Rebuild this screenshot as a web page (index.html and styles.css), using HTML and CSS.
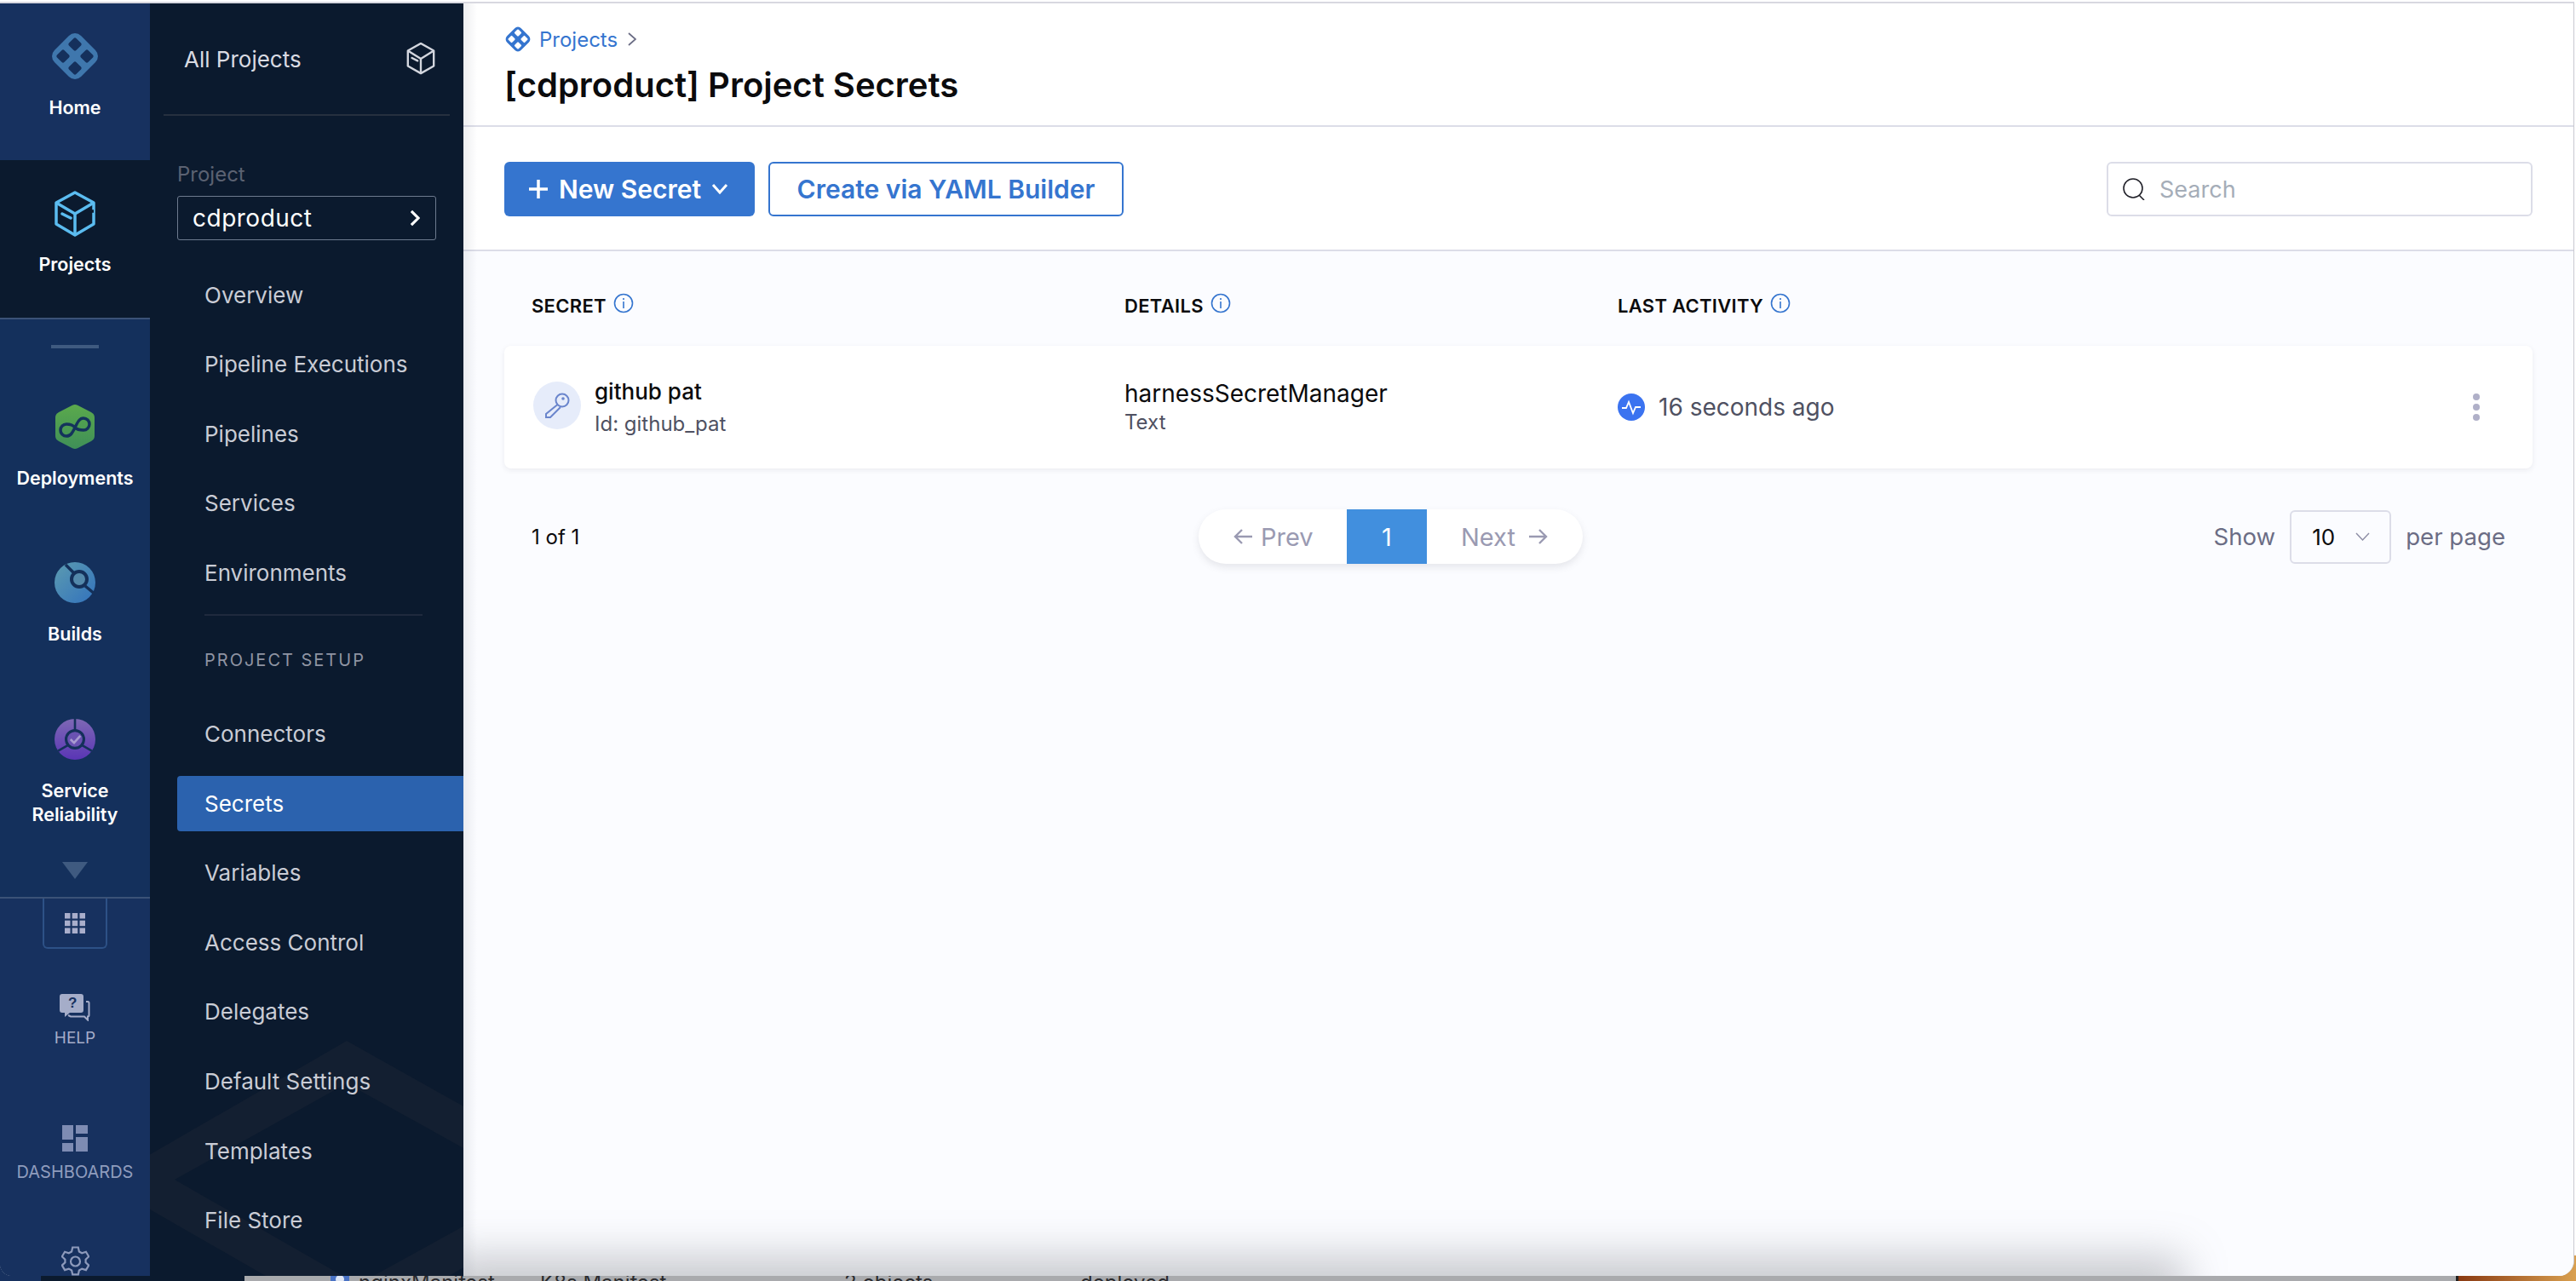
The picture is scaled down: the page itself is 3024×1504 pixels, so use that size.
FILE: index.html
```html
<!DOCTYPE html>
<html lang="en">
<head>
  <meta charset="UTF-8" />
  <title>Project Secrets</title>
  <link rel="stylesheet" href="styles.css">
</head>
<body>

<div class="backdrop">
  <div class="backdrop-row">
    <svg width="24" height="24" viewBox="0 0 24 24"><rect x="1" y="0" width="22" height="24" rx="3" fill="#4a72c4"/><circle cx="12" cy="10" r="5" fill="#dfe6f5"/></svg>
    <span class="backdrop-name">nginxManifest</span>
    <span class="backdrop-kind">K8s Manifest</span>
    <span class="backdrop-count">2 objects</span>
    <span>deployed</span>
  </div>
</div>

<div class="window">

  <nav class="rail">
    <div class="rail-top">
      <a class="rail-item rail-home">
        <svg width="60" height="60" viewBox="0 0 60 60">
          <rect x="8" y="8" width="44" height="44" rx="10" transform="rotate(45 30 30)" fill="#3f77ad"/>
          <g fill="#15305c">
            <rect x="24" y="10" width="12" height="12" rx="2" transform="rotate(45 30 16)"/>
            <rect x="10" y="24" width="12" height="12" rx="2" transform="rotate(45 16 30)"/>
            <rect x="38" y="24" width="12" height="12" rx="2" transform="rotate(45 44 30)"/>
            <rect x="24" y="38" width="12" height="12" rx="2" transform="rotate(45 30 44)"/>
          </g>
        </svg>
        <span>Home</span>
      </a>
      <a class="rail-item rail-active">
        <svg width="48" height="54" viewBox="0 0 48 54" fill="none" stroke="#5bbcf0" stroke-width="3.500" stroke-linejoin="round">
          <path d="M24 2L46 14V39L24 52L2 39V14z"/>
          <path d="M2 14L24 27L46 14M24 27V52"/>
          <path d="M9 27l10 5" stroke-linecap="round"/>
          <path d="M46 24H42" stroke="#0b1a2e"/>
        </svg>
        <span>Projects</span>
      </a>
      <div class="rail-mods">
        <div class="rail-handle"></div>
        <a class="rail-item rail-mod rail-deploy">
          <svg width="48" height="52" viewBox="0 0 46 52">
            <defs><linearGradient id="gradGreen" x1="0" y1="0" x2="0" y2="1"><stop offset="0" stop-color="#5ba94c"/><stop offset="1" stop-color="#3f8f58"/></linearGradient></defs>
            <path d="M23 0c1 0 2 .300 3 .800L42 9c2.500 1.300 4 3.500 4 6v22c0 2.500-1.500 4.700-4 6l-16 8.200c-2 1-4 1-6 0L4 43c-2.500-1.300-4-3.500-4-6V15c0-2.500 1.500-4.700 4-6L20 .800C21 .300 22 0 23 0z" fill="url(#gradGreen)"/>
            <path d="M23 27C20 23 16 23 13 23A7 7 0 0 0 13 37C18 37 20 33 23 27C26 21 28 16 33 16A7 7 0 0 1 33 30C29 30 26 30 23 27Z" fill="none" stroke="#14335c" stroke-width="3.500"/>
          </svg>
          <span>Deployments</span>
        </a>
        <a class="rail-item rail-mod rail-builds">
          <svg width="48" height="48" viewBox="0 0 48 48">
            <defs><linearGradient id="gradBlue" x1="0" y1="0" x2="1" y2="1"><stop offset="0" stop-color="#5c9bb0"/><stop offset="1" stop-color="#3272bd"/></linearGradient></defs>
            <circle cx="24" cy="24" r="24" fill="url(#gradBlue)"/>
            <path d="M13 3l10 10M36 28l12 10" stroke="#14305a" stroke-width="3.500"/>
            <circle cx="29" cy="20" r="9" fill="#5489ab" stroke="#14305a" stroke-width="4"/>
          </svg>
          <span>Builds</span>
        </a>
        <a class="rail-item rail-mod rail-srm">
          <svg width="48" height="48" viewBox="0 0 46 46">
            <defs><linearGradient id="gradPurple" x1="0" y1="0" x2="0" y2="1"><stop offset="0" stop-color="#7e68b5"/><stop offset="1" stop-color="#5a35b5"/></linearGradient></defs>
            <circle cx="23" cy="23" r="23" fill="url(#gradPurple)"/>
            <path d="M23 0v14M4 36l12-7M42 36l-12-7" stroke="#14305a" stroke-width="2.500"/>
            <circle cx="23" cy="23" r="10" fill="#6a52b2" stroke="#14305a" stroke-width="3"/>
            <path d="M18 23l4 4 7-8" fill="none" stroke="#a89bd0" stroke-width="2.500"/>
          </svg>
          <span>Service Reliability</span>
        </a>
        <div class="rail-more"></div>
      </div>
    </div>
    <div class="rail-bottom">
      <div class="rail-grid">
        <svg width="24" height="24" viewBox="0 0 24 24" fill="#a9aecb">
          <rect x="0" y="0" width="6.500" height="6.500"/><rect x="8.700" y="0" width="6.500" height="6.500"/><rect x="17.500" y="0" width="6.500" height="6.500"/>
          <rect x="0" y="8.700" width="6.500" height="6.500"/><rect x="8.700" y="8.700" width="6.500" height="6.500"/><rect x="17.500" y="8.700" width="6.500" height="6.500"/>
          <rect x="0" y="17.500" width="6.500" height="6.500"/><rect x="8.700" y="17.500" width="6.500" height="6.500"/><rect x="17.500" y="17.500" width="6.500" height="6.500"/>
        </svg>
      </div>
      <a class="rail-link rail-help">
        <svg width="36" height="32" viewBox="0 0 36 32">
          <path d="M3 0h22c2 0 3 1 3 3v16c0 2-1 3-3 3H12l-6 5v-5H3c-2 0-3-1-3-3V3c0-2 1-3 3-3z" fill="#a5adc9"/>
          <path d="M31 9h2c1 0 1.500.500 1.500 1.500V25c0 1-.500 1.500-1.500 1.500v4l-4-4H13l-3-1.500" fill="none" stroke="#a5adc9" stroke-width="2"/>
          <text x="10" y="16" class="help-mark">?</text>
        </svg>
        <span>HELP</span>
      </a>
      <a class="rail-link rail-dash">
        <svg width="30" height="31" viewBox="0 0 30 31" fill="#7e8cb3">
          <rect x="0" y="0" width="13" height="17"/><rect x="16" y="0" width="14" height="10"/>
          <rect x="0" y="21" width="13" height="10"/><rect x="16" y="14" width="14" height="17"/>
        </svg>
        <span>DASHBOARDS</span>
      </a>
      <a class="rail-link rail-gear">
        <svg width="33" height="38" viewBox="0 0 30 34" fill="none" stroke="#8d9abb" stroke-width="2">
          <path d="M12 2h6l1 4.500 3 1.700 4.300-1.400 3 5-3.300 3.100v3.200l3.300 3.100-3 5-4.300-1.400-3 1.700-1 4.500h-6l-1-4.500-3-1.700-4.300 1.400-3-5 3.300-3.100v-3.200l-3.300-3.100 3-5 4.300 1.400 3-1.700z"/>
          <circle cx="15" cy="17" r="5"/>
        </svg>
      </a>
    </div>
  </nav>

  <aside class="sidenav">
    <svg class="sidenav-mark" width="368" height="300" viewBox="176 1198 368 300">
      <path fill="#131f31" fill-rule="evenodd" d="M407 1222L710 1392L420 1560L120 1388zM407 1272L205 1385L420 1508L627 1394z"/>
    </svg>
    <div class="allprojects">
      <span>All Projects</span>
      <svg width="34" height="38" viewBox="0 0 34 40" fill="none" stroke="#d3d6de" stroke-width="2.500" stroke-linejoin="round">
        <path d="M17 1L33 10V29L17 38L1 29V10z"/>
        <path d="M1 10L17 20L33 10M17 20V38"/>
        <path d="M6 19l7 3.500" stroke-linecap="round"/>
      </svg>
    </div>
    <div class="project-label">Project</div>
    <div class="project-select">
      <span>cdproduct</span>
      <svg width="12" height="20" viewBox="0 0 13 22" fill="none" stroke="#fff" stroke-width="3.500"><path d="M2 2l9 9-9 9"/></svg>
    </div>
    <ul class="navlist">
      <li>Overview</li>
      <li>Pipeline Executions</li>
      <li>Pipelines</li>
      <li>Services</li>
      <li>Environments</li>
    </ul>
    <div class="nav-divider"></div>
    <div class="nav-heading">PROJECT SETUP</div>
    <ul class="navlist navlist-setup">
      <li>Connectors</li>
      <li class="nav-active">Secrets</li>
      <li>Variables</li>
      <li>Access Control</li>
      <li>Delegates</li>
      <li>Default Settings</li>
      <li>Templates</li>
      <li>File Store</li>
    </ul>
  </aside>

  <main class="main">
    <header class="pagehead">
      <div class="crumbs">
        <svg width="32" height="32" viewBox="0 0 60 60">
          <rect x="8" y="8" width="44" height="44" rx="10" transform="rotate(45 30 30)" fill="#3575cf"/>
          <g fill="#fff">
            <rect x="24" y="10" width="12" height="12" rx="2" transform="rotate(45 30 16)"/>
            <rect x="10" y="24" width="12" height="12" rx="2" transform="rotate(45 16 30)"/>
            <rect x="38" y="24" width="12" height="12" rx="2" transform="rotate(45 44 30)"/>
            <rect x="24" y="38" width="12" height="12" rx="2" transform="rotate(45 30 44)"/>
          </g>
        </svg>
        <a>Projects</a>
        <svg class="crumb-caret" width="10" height="16" viewBox="0 0 10 16" fill="none" stroke="#6b6d85" stroke-width="1.800"><path d="M1 1l8 7-8 7"/></svg>
      </div>
      <h1>[cdproduct] Project Secrets</h1>
    </header>

    <div class="toolbar">
      <button class="btn btn-primary">
        <svg width="24" height="24" viewBox="0 0 24 24" stroke="#fff" stroke-width="3.500"><path d="M12 1v22M1 12h22"/></svg>
        <span>New Secret</span>
        <svg width="20" height="12" viewBox="0 0 20 12" fill="none" stroke="#fff" stroke-width="3"><path d="M2 1l8 9 8-9"/></svg>
      </button>
      <button class="btn btn-outline">Create via YAML Builder</button>
      <div class="search">
        <svg width="26" height="26" viewBox="0 0 26 26" fill="none" stroke="#22222a" stroke-width="1.600"><circle cx="12" cy="12" r="11"/><path d="M19 20l6 6"/></svg>
        <span>Search</span>
      </div>
    </div>

    <section class="content">
      <div class="tablehead">
        <div class="col col-name">SECRET <svg class="info" width="24" height="24" viewBox="0 0 24 24" fill="none" stroke="#3575cf" stroke-width="1.600"><circle cx="12" cy="12" r="10.500"/><path d="M12 10v8M12 6v2"/></svg></div>
        <div class="col col-details">DETAILS <svg class="info" width="24" height="24" viewBox="0 0 24 24" fill="none" stroke="#3575cf" stroke-width="1.600"><circle cx="12" cy="12" r="10.500"/><path d="M12 10v8M12 6v2"/></svg></div>
        <div class="col col-activity">LAST ACTIVITY <svg class="info" width="24" height="24" viewBox="0 0 24 24" fill="none" stroke="#3575cf" stroke-width="1.600"><circle cx="12" cy="12" r="10.500"/><path d="M12 10v8M12 6v2"/></svg></div>
      </div>

      <div class="row">
        <div class="col col-name secret-cell">
          <div class="key-badge">
            <svg width="30" height="30" viewBox="0 0 30 30" fill="none" stroke="#6a85cc" stroke-width="2">
              <circle cx="21" cy="9" r="7.500"/>
              <circle cx="22" cy="7" r="1.800" fill="#6a85cc" stroke="none"/>
              <path d="M15.500 14L2 25v4h5l12-12"/>
            </svg>
          </div>
          <div class="secret-text">
            <div class="secret-name">github pat</div>
            <div class="secret-id">Id: github_pat</div>
          </div>
        </div>
        <div class="col col-details">
          <div class="manager">harnessSecretManager</div>
          <div class="manager-type">Text</div>
        </div>
        <div class="col col-activity activity-cell">
          <svg width="32" height="32" viewBox="0 0 32 32">
            <circle cx="16" cy="16" r="16" fill="#3b73f0"/>
            <path d="M5 17h5l3-7 5 13 3-7h6" fill="none" stroke="#fff" stroke-width="1.800"/>
          </svg>
          <span>16 seconds ago</span>
        </div>
        <div class="row-menu"><i></i><i></i><i></i></div>
      </div>

      <div class="pagerbar">
        <div class="pager-count">1 of 1</div>
        <div class="pager">
          <span class="pager-btn pager-prev">
            <svg width="22" height="18" viewBox="0 0 22 18" fill="none" stroke="#9a9ab2" stroke-width="2.400"><path d="M10 1L2 9l8 8M2 9h20"/></svg>
            Prev
          </span>
          <span class="pager-num">1</span>
          <span class="pager-btn pager-next">
            Next
            <svg width="22" height="18" viewBox="0 0 22 18" fill="none" stroke="#9a9ab2" stroke-width="2.400"><path d="M12 1l8 8-8 8M20 9H0"/></svg>
          </span>
        </div>
        <div class="pager-size">
          <span>Show</span>
          <div class="size-select">
            <b>10</b>
            <svg width="17" height="10" viewBox="0 0 17 10" fill="none" stroke="#8d8da5" stroke-width="1.400"><path d="M1 1l7.500 8L16 1"/></svg>
          </div>
          <span>per page</span>
        </div>
      </div>
    </section>
    <div class="footer-shade"></div>
  </main>
</div>

</body>
</html>
```

FILE: styles.css
```css
html, body {
  margin: 0;
  padding: 0;
  height: 100%;
}
body {
  position: relative;
  width: 3024px;
  height: 1504px;
  overflow: hidden;
  font-family: Inter, "Liberation Sans", sans-serif;
  background: #fff;
}
ul {
  list-style: none;
  margin: 0;
  padding: 0;
}

/* page behind the app window, only a sliver shows at the bottom */
.backdrop {
  position: absolute;
  left: 0;
  right: 0;
  bottom: 0;
  height: 30px;
  background: linear-gradient(90deg, #17315f 0, #17315f 48px, #0b1a2e 48px, #0b1a2e 287px, #a9aaad 287px, #a9aaad 2883px, #222 2883px, #222 2886px, #8a3a12 2886px, #d9a050 100%);
  overflow: hidden;
}
.backdrop-row {
  display: flex;
  align-items: flex-start;
  margin: 18px 0 0 387px;
  font-size: 24px;
  line-height: 28px;
  color: #2a2a2e;
}
.backdrop-name { margin-left: 10px; width: 213px; }
.backdrop-kind { width: 357px; }
.backdrop-count { width: 277px; }

.window {
  position: absolute;
  left: 0;
  top: 2px;
  width: 3022px;
  height: 1496px;
  box-sizing: border-box;
  border-top: 2px solid #d8d8e0;
  border-right: 1px solid #c9c9d0;
  display: flex;
  background: #fff;
  overflow: hidden;
  border-radius: 0 0 18px 14px;
}

/* narrow module rail */
.rail {
  width: 176px;
  flex-shrink: 0;
  background: #14305c;
  display: flex;
  flex-direction: column;
  color: #fff;
  overflow: hidden;
}
.rail-top {
  height: 1051px;
  box-sizing: border-box;
  border-bottom: 2px solid #3b5277;
  flex-shrink: 0;
  overflow: hidden;
}
.rail-item {
  display: flex;
  flex-direction: column;
  align-items: center;
  font-size: 21.500px;
  font-weight: 600;
  text-align: center;
  line-height: 26px;
}
.rail-home {
  height: 184px;
  padding-top: 32px;
  box-sizing: border-box;
  background: #17315f;
}
.rail-home span {
  margin-top: 17px;
}
.rail-active {
  height: 185px;
  padding-top: 36px;
  box-sizing: border-box;
  background: #0b1a2e;
}
.rail-active span {
  margin-top: 19px;
}
.rail-mods {
  border-top: 2px solid #3b5277;
}
.rail-handle {
  width: 56px;
  height: 4px;
  margin: 30px auto 0;
  background: #3f5a80;
}
.rail-mod {
  line-height: 28px;
}
.rail-mod svg {
  margin-bottom: 20px;
}
.rail-deploy { margin-top: 66px; }
.rail-builds { margin-top: 85px; }
.rail-srm { margin-top: 86px; }
.rail-builds svg, .rail-srm svg { margin-bottom: 22px; }
.rail-srm span { width: 120px; }
.rail-more {
  width: 0;
  height: 0;
  margin: 42px auto 0;
  border-left: 15px solid transparent;
  border-right: 15px solid transparent;
  border-top: 20px solid #3f5a80;
}
.rail-bottom {
  display: flex;
  flex-direction: column;
  align-items: center;
  background: #17315f;
  flex: 1;
}
.rail-grid {
  width: 76px;
  height: 59px;
  flex-shrink: 0;
  box-sizing: border-box;
  border: 2px solid #2d5186;
  border-top: none;
  border-radius: 0 0 6px 6px;
  display: flex;
  align-items: center;
  justify-content: center;
}
.rail-link {
  display: flex;
  flex-direction: column;
  align-items: center;
  flex-shrink: 0;
  font-size: 19px;
  color: #a5adc9;
  line-height: 24px;
}
.rail-help {
  margin-top: 53px;
}
.rail-help span {
  margin-top: 8px;
}
.help-mark {
  font-family: "Liberation Sans", sans-serif;
  font-size: 17px;
  font-weight: bold;
  fill: #17315f;
}
.rail-dash {
  margin-top: 90px;
  font-size: 20px;
  color: #8f9cbd;
}
.rail-dash span {
  margin-top: 12px;
}
.rail-gear {
  margin-top: 74px;
}

/* second nav column */
.sidenav {
  position: relative;
  width: 368px;
  flex-shrink: 0;
  background: #0b1a2e;
  color: #cfd2da;
  overflow: hidden;
}
.sidenav-mark {
  position: absolute;
  left: 0;
  bottom: 0;
}
.allprojects {
  position: relative;
  height: 132px;
  margin: 0 16px;
  padding: 0 17px 0 24px;
  box-sizing: border-box;
  border-bottom: 2px solid #26303f;
  display: flex;
  align-items: center;
  justify-content: space-between;
  font-size: 26px;
  color: #d9dbe2;
}
.project-label {
  position: relative;
  margin: 54px 0 0 32px;
  font-size: 24px;
  line-height: 30px;
  color: #5b6272;
}
.project-select {
  position: relative;
  height: 52px;
  margin: 10px 32px 0;
  padding: 0 18px 0 17px;
  box-sizing: border-box;
  border: 1px solid #6d7a8e;
  border-radius: 3px;
  display: flex;
  align-items: center;
  justify-content: space-between;
  font-size: 28px;
  color: #fff;
  letter-spacing: 0.5px;
}
.navlist {
  position: relative;
  margin-top: 31.500px;
}
.navlist li {
  margin-left: 32px;
  padding-left: 32px;
  height: 65px;
  margin-bottom: 16.600px;
  line-height: 65px;
  font-size: 26px;
  color: #c9ccd5;
  white-space: nowrap;
}
.navlist li:last-child {
  margin-bottom: 0;
}
.navlist-setup {
  margin-top: 40.500px;
}
.navlist li.nav-active {
  background: #2b62ae;
  color: #fff;
  border-radius: 4px 0 0 4px;
}
.nav-divider {
  position: relative;
  height: 2px;
  margin: 16.600px 48px 0 64px;
  background: #1f2a3d;
}
.nav-heading {
  position: relative;
  margin: 39px 0 0 64px;
  font-size: 20px;
  line-height: 26px;
  letter-spacing: 2px;
  color: #8f94a3;
}

/* main area */
.main {
  position: relative;
  flex: 1;
  min-width: 0;
  display: flex;
  flex-direction: column;
  background: #fbfcff;
  overflow: hidden;
}
.main::before {
  content: "";
  position: absolute;
  left: 0;
  top: 0;
  bottom: 0;
  width: 16px;
  background: linear-gradient(90deg, rgba(30, 40, 70, 0.08), rgba(30, 40, 70, 0));
}
.pagehead {
  height: 145px;
  box-sizing: border-box;
  padding: 26px 0 0 48px;
  background: #fff;
  border-bottom: 2px solid #dcdde8;
}
.crumbs {
  display: flex;
  align-items: center;
  gap: 9px;
  height: 32px;
  font-size: 24px;
  color: #3575cf;
}
.crumb-caret {
  margin-left: 3px;
}
.pagehead h1 {
  margin: 14px 0 0;
  font-size: 40px;
  line-height: 48px;
  font-weight: 600;
  color: #0b0b0d;
}
.toolbar {
  height: 146px;
  box-sizing: border-box;
  padding: 2px 48px 0;
  display: flex;
  align-items: center;
  gap: 16px;
  background: #fff;
  border-bottom: 2px solid #dcdde8;
}
.btn {
  height: 64px;
  border-radius: 6px;
  font-family: inherit;
  font-size: 30px;
  font-weight: 600;
  display: flex;
  align-items: center;
  box-sizing: border-box;
}
.btn-primary {
  width: 294px;
  background: #3575cf;
  border: none;
  color: #fff;
  padding: 0 0 0 28px;
  gap: 12px;
}
.btn-outline {
  width: 417px;
  background: #fff;
  border: 2px solid #3575cf;
  color: #3575cf;
  justify-content: center;
  padding: 0;
}
.search {
  margin-left: auto;
  width: 500px;
  height: 64px;
  box-sizing: border-box;
  border: 2px solid #dcdde8;
  border-radius: 6px;
  background: #fff;
  display: flex;
  align-items: center;
  gap: 17px;
  padding-left: 17px;
  font-size: 27px;
  color: #a5adb8;
}
.content {
  position: relative;
  padding: 0 48px;
}
.tablehead {
  height: 111px;
  display: flex;
  align-items: center;
  font-size: 22px;
  letter-spacing: 0.300px;
  font-weight: 600;
  color: #0b0b0d;
  padding: 16px 0 0 32px;
  box-sizing: border-box;
}
.col {
  flex-shrink: 0;
  display: flex;
}
.col-name { width: 696px; }
.col-details { width: 579px; }
.col-activity { width: 500px; }
.tablehead .col {
  align-items: center;
  gap: 8px;
}
.info {
  margin-top: -6px;
}
.row {
  height: 144px;
  display: flex;
  align-items: center;
  padding-left: 32px;
  background: #fff;
  border-radius: 8px;
  box-shadow: 0 2px 6px rgba(40, 41, 61, 0.08);
  position: relative;
}
.row .col-details {
  flex-direction: column;
}
.secret-cell {
  align-items: center;
  gap: 16px;
}
.key-badge {
  width: 56px;
  height: 56px;
  margin: -4px 0 0 2px;
  border-radius: 50%;
  background: #e6ecfa;
  display: flex;
  align-items: center;
  justify-content: center;
}
.secret-text {
  margin-top: 2px;
}
.secret-name {
  font-size: 26px;
  font-weight: 500;
  line-height: 34px;
  color: #0b0b0d;
}
.secret-id {
  font-size: 24px;
  line-height: 34px;
  margin-top: 4px;
  color: #4f5162;
}
.manager {
  font-size: 28px;
  line-height: 33px;
  color: #0b0b0d;
  margin-top: 2px;
}
.manager-type {
  font-size: 24px;
  line-height: 33px;
  color: #4f5162;
}
.activity-cell {
  align-items: center;
  gap: 16px;
  font-size: 28px;
  color: #4f5162;
}
.row-menu {
  position: absolute;
  right: 62px;
  top: 56px;
  display: flex;
  flex-direction: column;
  gap: 4px;
}
.row-menu i {
  display: block;
  width: 8px;
  height: 8px;
  border-radius: 50%;
  background: #b0b0c8;
}
.pagerbar {
  height: 64px;
  margin-top: 48px;
  padding: 0 32px;
  display: flex;
  align-items: center;
  position: relative;
  justify-content: space-between;
}
.pager-count {
  font-size: 24px;
  color: #0b0b0d;
}
.pager {
  position: absolute;
  left: 815px;
  top: 0;
  height: 64px;
  width: 451px;
  display: flex;
  background: #fff;
  border-radius: 32px;
  box-shadow: 0 4px 8px rgba(96, 97, 112, 0.14);
  font-size: 29px;
  color: #9a9ab2;
  overflow: hidden;
}
.pager-btn {
  display: flex;
  align-items: center;
  padding-left: 41px;
  box-sizing: border-box;
}
.pager-prev {
  width: 174px;
  gap: 10px;
}
.pager-next {
  flex: 1;
  gap: 16px;
  padding-left: 40px;
}
.pager-num {
  width: 94px;
  background: #418fde;
  color: #fff;
  display: flex;
  align-items: center;
  justify-content: center;
}
.pager-size {
  display: flex;
  align-items: center;
  gap: 17px;
  font-size: 27.600px;
  color: #6b6d85;
}
.size-select {
  width: 119px;
  height: 63px;
  box-sizing: border-box;
  border: 2px solid #dcdde8;
  border-radius: 6px;
  display: flex;
  align-items: center;
  justify-content: space-between;
  padding: 0 23px 0 24px;
}
.size-select b {
  font-weight: 400;
  font-size: 26px;
  color: #0b0b0d;
}

/* soft shadow from the panel sitting under the window */
.footer-shade {
  position: absolute;
  left: 0;
  right: 480px;
  bottom: -30px;
  height: 30px;
  box-shadow: 0 0 50px 22px rgba(120, 122, 130, 0.4);
}
```
